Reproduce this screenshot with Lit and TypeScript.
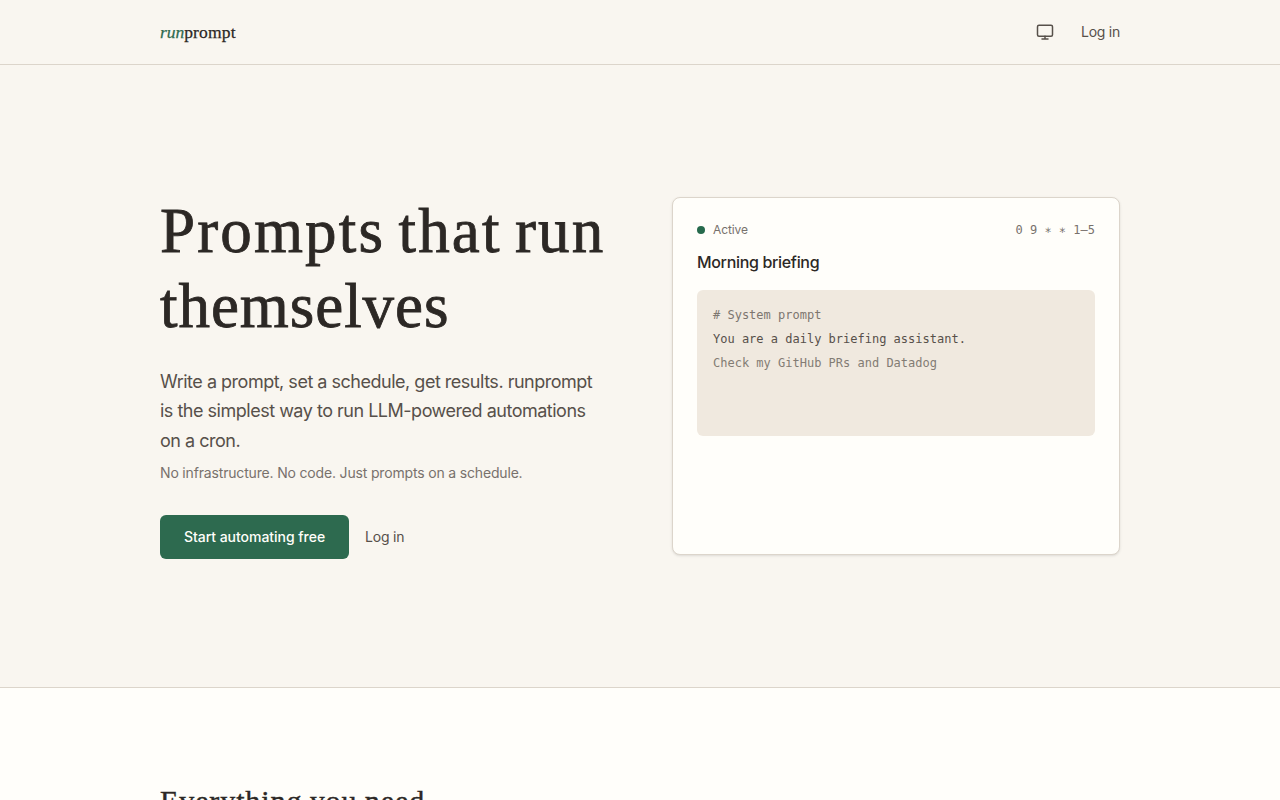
import { LitElement, html, css } from "lit";
import { customElement } from "lit/decorators.js";

@customElement("prompt-card")
class PromptCard extends LitElement {
  static styles = css`
    :host { display: block; box-sizing: border-box; height: 358px; padding: 24px; border: 1px solid #dcd5cb; border-radius: 8px; background: #fffefa; box-shadow: 0 1px 3px rgba(44, 40, 37, 0.1), 0 1px 2px -1px rgba(44, 40, 37, 0.1); }
    .row { display: flex; align-items: center; justify-content: space-between; height: 16px; font-size: 12px; line-height: 16px; color: #78716c; }
    .status { display: flex; align-items: center; gap: 8px; letter-spacing: -0.1px; }
    .dot { width: 8px; height: 8px; border-radius: 50%; background: #266a4c; }
    .cron, .code { font-family: "DejaVu Sans Mono", "Liberation Mono", monospace; font-size: 12px; }
    .title { margin: 12px 0 16px; font-size: 16px; line-height: 24px; font-weight: 500; letter-spacing: -0.33px; color: #2c2825; }
    .code { box-sizing: border-box; height: 146px; padding: 16px; display: flex; flex-direction: column; gap: 6px; border-radius: 6px; background: #f0e9df; line-height: 18px; color: #57504a; }
    .muted { color: #7d766f; }
    .typing { color: #837c74; }
  `;
  render() {
    return html`
      <div class="row">
        <span class="status"><span class="dot"></span>Active</span>
        <span class="cron">0 9 ∗ ∗ 1–5</span>
      </div>
      <div class="title">Morning briefing</div>
      <div class="code">
        <div class="muted"># System prompt</div>
        <div>You are a daily briefing assistant.</div>
        <div class="typing">Check my GitHub PRs and Datadog</div>
      </div>
    `;
  }
}

@customElement("app-root")
class AppRoot extends LitElement {
  static styles = css`
    :host { display: block; height: 800px; overflow: hidden; background: #f9f6f0; color: #57504a; font-family: Inter, sans-serif; }
    .wrap { width: 960px; margin: 0 auto; }
    header { border-bottom: 1px solid #dcd5cb; }
    .bar { height: 64px; display: flex; align-items: center; justify-content: space-between; }
    .logo, h1, h2 { font-family: "Liberation Serif", serif; color: #2c2825; font-weight: 400; margin: 0; }
    .logo { font-size: 17.5px; line-height: 28px; letter-spacing: 0.18px; -webkit-text-stroke: 0.25px; }
    .logo em { color: #2d6a4f; letter-spacing: -0.05px; }
    nav { display: flex; align-items: center; gap: 26px; font-size: 14px; line-height: 20px; letter-spacing: -0.25px; }
    svg { display: block; }
    .hero { display: grid; grid-template-columns: 448px 448px; gap: 64px; align-items: center; padding: 128px 0; }
    h1 { box-sizing: border-box; height: 150px; padding-top: 1px; font-size: 63px; line-height: 75px; white-space: nowrap; -webkit-text-stroke: 0.8px #2c2825; }
    .l1 { letter-spacing: 2.15px; word-spacing: -4.5px; }
    .l2 { letter-spacing: 0.95px; }
    .lead { margin: 24px 0 8px; font-size: 18px; line-height: 29.25px; white-space: nowrap; letter-spacing: -0.49px; }
    .sub { margin: 0 0 32px; font-size: 14px; line-height: 20px; color: #78716c; letter-spacing: -0.17px; }
    .actions { display: flex; align-items: center; gap: 16px; font-size: 14px; letter-spacing: -0.18px; }
    .cta { box-sizing: border-box; height: 44px; width: 189px; display: flex; align-items: center; justify-content: center; border-radius: 6px; background: #2d6a4f; color: #fffefa; font-weight: 500; letter-spacing: -0.03px; }
    .features { border-top: 1px solid #dcd5cb; background: #fffefa; padding-top: 94px; height: 200px; }
    h2 { font-size: 30px; line-height: 38px; letter-spacing: 0.9px; word-spacing: -1px; -webkit-text-stroke: 0.4px #2c2825; }
  `;
  render() {
    return html`
      <header>
        <div class="wrap bar">
          <div class="logo"><em>run</em><span>prompt</span></div>
          <nav>
            <svg width="20" height="20" viewBox="0 0 20 20" fill="none" stroke="#57504a" stroke-width="1.5" stroke-linecap="round" stroke-linejoin="round">
              <rect x="2.5" y="3.2" width="15" height="11" rx="1.5" />
              <path d="M10 14.2v2.8M7 17h6" />
            </svg>
            <span>Log in</span>
          </nav>
        </div>
      </header>
      <section class="wrap hero">
        <div>
          <h1><span class="l1">Prompts that run</span><br /><span class="l2">themselves</span></h1>
          <p class="lead">Write a prompt, set a schedule, get results. runprompt<br />is the simplest way to run LLM-powered automations<br />on a cron.</p>
          <p class="sub">No infrastructure. No code. Just prompts on a schedule.</p>
          <div class="actions"><span class="cta">Start automating free</span><span>Log in</span></div>
        </div>
        <prompt-card></prompt-card>
      </section>
      <section class="features"><div class="wrap"><h2>Everything you need</h2></div></section>
    `;
  }
}
